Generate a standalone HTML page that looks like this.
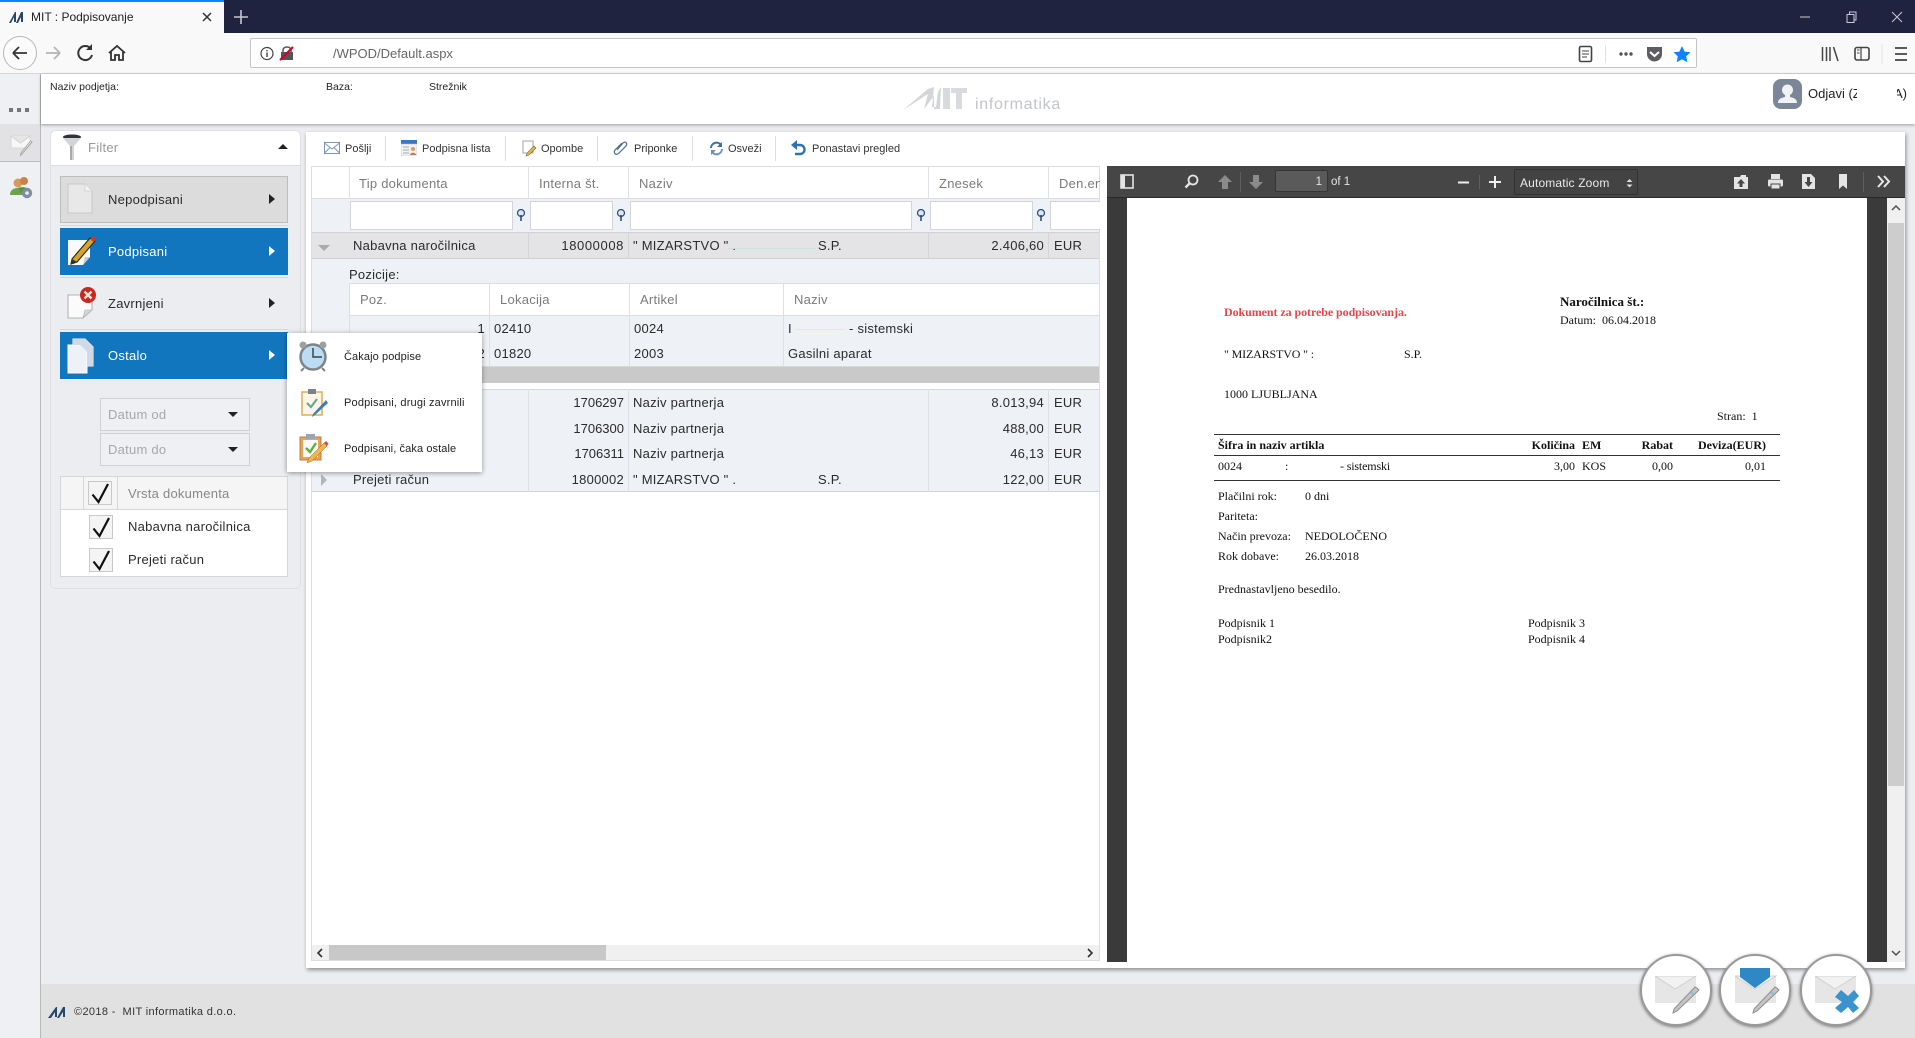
<!DOCTYPE html>
<html lang="sl"><head><meta charset="utf-8"><title>MIT : Podpisovanje</title>
<style>
html,body{margin:0;padding:0;width:1915px;height:1038px;overflow:hidden;background:#ecedf1}
#r{position:relative;width:1915px;height:1038px;overflow:hidden;font-family:"Liberation Sans",sans-serif;color:#222}
#r div,#r span.a,#r svg{position:absolute}
.t{position:absolute;white-space:nowrap;line-height:16px;height:16px}
.g{font-size:13px;letter-spacing:.25px;color:#2b2b2b}
.h{font-size:13px;letter-spacing:.25px;color:#7b7b7b}
.tb{font-size:11px;color:#333;top:141px}
.s{font-family:"Liberation Serif",serif;font-size:12px;color:#111}
.b{font-weight:bold}
.rgt{text-align:right}
.sep{width:1px;background:#ddd;top:136px;height:25px}
.fi{background:#fff;border:1px solid #d2d4d8;top:201px;height:27px;box-sizing:content-box}
.cb{background:#f4f4f4;border:1px solid #c9c9c9;width:22px;height:22px}
.vl{width:1px;background:#dcdfe4}
</style></head><body><div id="r">

<!-- browser chrome -->
<div style="left:0;top:0;width:1915px;height:33px;background:#1f2340"></div>
<div style="left:0;top:0;width:224px;height:33px;background:#f9f9fa"></div>
<div style="left:0;top:0;width:224px;height:2px;background:#0a84ff"></div>
<svg style="left:9px;top:11px" width="17" height="12" viewBox="0 0 17 12"><path d="M0 12 L6 1 L7 1 L7 11 L5 11 L5 6 L2 12Z M7 12 L12 1 L14 1 L14 11 L12 11 L12 6 L9 12Z" fill="#24476a"/></svg>
<div class="t" style="left:31px;top:9px;font-size:12px;color:#222">MIT : Podpisovanje</div>
<svg style="left:201px;top:11px" width="12" height="12"><path d="M2 2L10 10M10 2L2 10" stroke="#333" stroke-width="1.5"/></svg>
<svg style="left:234px;top:10px" width="14" height="14"><path d="M7 0V14M0 7H14" stroke="#c6c8d2" stroke-width="1.6"/></svg>
<svg style="left:1800px;top:11px" width="110" height="12"><path d="M0 6H10" stroke="#c8c9d2"/><path d="M47 3.5h7v8h-7zM49.500 3.500V1h6.500v8h-2" fill="none" stroke="#c8c9d2"/><path d="M92 1L102 11M102 1L92 11" stroke="#c8c9d2"/></svg>

<div style="left:0;top:33px;width:1915px;height:40px;background:#f9f9fa"></div>
<div style="left:0;top:73px;width:1915px;height:1px;background:#d6d6d8"></div>
<svg style="left:2px;top:35px" width="130" height="36" viewBox="0 0 130 36">
<circle cx="18" cy="18" r="16.500" fill="#fbfbfb" stroke="#b8b8b8"/>
<path d="M11 18H25M11 18L17 12M11 18L17 24" fill="none" stroke="#333" stroke-width="1.800"/>
<path d="M44 18H58M58 18L52 12M58 18L52 24" fill="none" stroke="#b4b4b4" stroke-width="1.800"/>
<path d="M89 14A7 7 0 1 0 90 20" fill="none" stroke="#333" stroke-width="2"/><path d="M90 9V15H84Z" fill="#333"/>
<path d="M107 18L115 11L123 18M109 17V25H113V20H117V25H121V17" fill="none" stroke="#333" stroke-width="1.800"/>
</svg>
<div style="left:250px;top:38px;width:1445px;height:28px;background:#fff;border:1px solid #c4c4c6;border-radius:2px"></div>
<svg style="left:260px;top:46px" width="38" height="15" viewBox="0 0 38 15"><circle cx="7" cy="7.500" r="6" fill="none" stroke="#444" stroke-width="1.200"/><path d="M7 6.500V11M7 4V5.400" stroke="#444" stroke-width="1.400"/><path d="M21 6h12v8H21z" fill="#555"/><path d="M23 6V4a4 3 0 0 1 8 0V6" fill="none" stroke="#555" stroke-width="1.500"/><path d="M20 14L33 1" stroke="#d70022" stroke-width="2"/></svg>
<div class="t" style="left:333px;top:46px;font-size:13px;color:#666">/WPOD/Default.aspx</div>
<svg style="left:1577px;top:44px" width="116" height="20" viewBox="0 0 116 20">
<rect x="2.500" y="2.500" width="12" height="15" rx="1.500" fill="none" stroke="#444" stroke-width="1.600"/><path d="M5 7H12M5 10H12M5 13H10" stroke="#444"/>
<path d="M28.500 1V19" stroke="#e2e2e2"/>
<circle cx="44" cy="10" r="1.700" fill="#555"/><circle cx="49" cy="10" r="1.700" fill="#555"/><circle cx="54" cy="10" r="1.700" fill="#555"/>
<path d="M70 3H85V10A7.500 7.500 0 0 1 70 10Z" fill="#5e5e62"/><path d="M73 8L77.500 12L82 8" fill="none" stroke="#fff" stroke-width="2"/>
<path d="M105 2L107.600 7.600L113.500 8.300L109.200 12.300L110.300 18.200L105 15.300L99.700 18.200L100.800 12.300L96.500 8.300L102.400 7.600Z" fill="#0a84ff"/>
</svg>
<svg style="left:1820px;top:44px" width="90" height="20" viewBox="0 0 90 20">
<path d="M2.500 3V17M6.500 3V17M10 3V17M13.500 3L18 17" stroke="#444" stroke-width="1.500" fill="none"/>
<rect x="35" y="3.500" width="14" height="12.500" rx="2" fill="none" stroke="#444" stroke-width="1.600"/><path d="M41 4V16" stroke="#444" stroke-width="1.200"/><path d="M37 6H39.500M37 9H39.500" stroke="#444"/>
<path d="M62 0V20" stroke="#e2e2e2"/>
<path d="M75 4H87M75 10H87M75 16H87" stroke="#444" stroke-width="1.800"/>
</svg>

<!-- left rail -->
<div style="left:0;top:74px;width:40px;height:964px;background:#eff0f3"></div>
<div style="left:40px;top:74px;width:1px;height:964px;background:#b9b9bb"></div>
<svg style="left:9px;top:108px" width="20" height="4"><rect x="0" y="0" width="4" height="4" fill="#777"/><rect x="8" y="0" width="4" height="4" fill="#777"/><rect x="16" y="0" width="4" height="4" fill="#777"/></svg>
<div style="left:0;top:124px;width:40px;height:38px;background:#e2e2e4;border-bottom:1px solid #bcbcbe;box-sizing:border-box"></div>
<svg style="left:10px;top:134px" width="24" height="22" viewBox="0 0 24 22"><path d="M1 2H20V14H1Z" fill="#f7f7f7" stroke="#d8d8d8"/><path d="M1 2L10.500 9L20 2" fill="#e6e6e6" stroke="#d0d0d0"/><path d="M22 8L12 20L10.500 21.500L11 19L20.500 7Z" fill="#ececec" stroke="#a8a8a8"/></svg>
<svg style="left:10px;top:175px" width="23" height="24" viewBox="0 0 23 24"><path d="M0 20C0 14 5 13 8 13C11 13 14 15 14 20Z" fill="#6da44a"/><circle cx="8" cy="8" r="4.500" fill="#d89a5a"/><path d="M8 13C10 12 17 11 18 15L12 19Z" fill="#5b9440"/><circle cx="14" cy="6" r="4" fill="#c9834a"/><circle cx="17" cy="18" r="5.200" fill="#7f8ea3"/><circle cx="17" cy="18" r="1.800" fill="#eef"/></svg>

<!-- header -->
<div style="left:41px;top:74px;width:1874px;height:50px;background:#fff;box-shadow:0 1px 3px rgba(0,0,0,.35)"></div>
<div class="t" style="left:50px;top:79px;font-size:10.500px;color:#222">Naziv podjetja:</div>
<div class="t" style="left:326px;top:79px;font-size:10.500px;color:#222">Baza:</div>
<div class="t" style="left:429px;top:79px;font-size:10.500px;color:#222">Strežnik</div>
<svg style="left:900px;top:86px" width="170" height="30" viewBox="0 0 170 30">
<path d="M3 24L28 3L34 1L32 21H36L38 6L41 1L40 23H34L34 10L24 23L28 8Z" fill="#d3d5d8"/>
<rect x="43" y="2" width="7" height="21" fill="#d8dadd"/><path d="M51 2H67V7H62V23H56V7H51Z" fill="#d8dadd"/>
<text x="75" y="23" font-family="Liberation Sans,sans-serif" font-size="16" letter-spacing=".7" fill="#c2c5c9">informatika</text></svg>
<svg style="left:1773px;top:79px" width="29" height="30" viewBox="0 0 29 30"><rect x="0" y="0" width="29" height="30" rx="8" fill="#7b8698"/><circle cx="14.500" cy="11" r="5.500" fill="#f1f2f4"/><path d="M12 15V18C8 19 5 20 5 24H24C24 20 21 19 17 18V15Z" fill="#f1f2f4"/></svg>
<div class="t" style="left:1808px;top:86px;font-size:13px;color:#222;width:49px;overflow:hidden">Odjavi (Z</div>
<div class="t" style="left:1897px;top:86px;font-size:13px;color:#222;width:12px;overflow:hidden;text-indent:-3px">A)</div>

<!-- filter panel -->
<div style="left:50px;top:130px;width:249px;height:457px;background:#ecedf1;border:1px solid #dfe0e3;border-radius:5px;box-sizing:content-box"></div>
<div style="left:51px;top:131px;width:249px;height:34px;background:#fff;border-bottom:1px solid #dcdde0;border-radius:5px 5px 0 0"></div>
<svg style="left:62px;top:134px" width="20" height="28" viewBox="0 0 20 28"><ellipse cx="10" cy="3" rx="9" ry="2.500" fill="#333"/><path d="M1 4L8 12V26H12V12L19 4Z" fill="#d2d4d6"/><path d="M8 12V26H10V12Z" fill="#a8aaac"/></svg>
<div class="t h" style="left:88px;top:140px;font-size:13px;color:#999">Filter</div>
<div style="left:278px;top:144px;width:0;height:0;border-left:5px solid transparent;border-right:5px solid transparent;border-bottom:5px solid #222"></div>

<div style="left:60px;top:176px;width:228px;height:47px;background:#dcdcdc;border:1px solid #bdbdbd;box-sizing:border-box"></div>
<svg style="left:67px;top:183px" width="26" height="32" viewBox="0 0 26 32"><path d="M1 1H18L25 8V30H1Z" fill="#e8e8e8" stroke="#c9c9c9"/><path d="M18 1V8H25" fill="#f4f4f4" stroke="#d2d2d2"/></svg>
<div class="t g" style="left:108px;top:192px">Nepodpisani</div>
<div style="left:269px;top:194px;border-left:6px solid #222;border-top:5px solid transparent;border-bottom:5px solid transparent"></div>
<div style="left:60px;top:225px;width:228px;height:1px;background:#d5d6d9"></div>

<div style="left:60px;top:228px;width:228px;height:47px;background:#1176bd"></div>
<svg style="left:66px;top:235px" width="32" height="32" viewBox="0 0 32 32"><path d="M2 5H24V22L17 30H2Z" fill="#fafafa"/><path d="M6 24L24 3L29 6L11 27L5 29Z" fill="#d9a520" stroke="#222" stroke-width="1.100"/><path d="M6 24L5 29L11 27Z" fill="#333"/><circle cx="27.500" cy="4" r="2.500" fill="#c5392f"/><path d="M17 30L24 22H19Z" fill="#c9c9c9"/></svg>
<div class="t g" style="left:108px;top:244px;color:#fff">Podpisani</div>
<div style="left:269px;top:246px;border-left:6px solid #fff;border-top:5px solid transparent;border-bottom:5px solid transparent"></div>
<div style="left:60px;top:277px;width:228px;height:1px;background:#d5d6d9"></div>

<svg style="left:66px;top:286px" width="32" height="34" viewBox="0 0 32 34"><path d="M2 9H26V24L17 32H2Z" fill="#fbfbfb" stroke="#9d9d9d" stroke-width=".8"/><path d="M17 32L19 24H26Z" fill="#d6d6d6" stroke="#aaa" stroke-width=".6"/><circle cx="22" cy="9" r="8" fill="#c9271f"/><path d="M18.500 5.500L25.500 12.500M25.500 5.500L18.500 12.500" stroke="#f3e3d0" stroke-width="2.500"/></svg>
<div class="t g" style="left:108px;top:296px">Zavrnjeni</div>
<div style="left:269px;top:298px;border-left:6px solid #222;border-top:5px solid transparent;border-bottom:5px solid transparent"></div>
<div style="left:60px;top:329px;width:228px;height:1px;background:#d5d6d9"></div>

<div style="left:60px;top:332px;width:228px;height:47px;background:#1176bd"></div>
<svg style="left:67px;top:338px" width="28" height="36" viewBox="0 0 28 36"><path d="M6 1H18L26 9V28H6Z" fill="#dfe7f2" stroke="#fff"/><path d="M1 7H13L20 14V35H1Z" fill="#edf2f9" stroke="#fff"/><path d="M6 1H18L26 9V28H20V14L13 7H6Z" fill="#cfd9e8"/></svg>
<div class="t g" style="left:108px;top:348px;color:#fff">Ostalo</div>
<div style="left:269px;top:350px;border-left:6px solid #fff;border-top:5px solid transparent;border-bottom:5px solid transparent"></div>

<div style="left:100px;top:398px;width:150px;height:33px;background:#eff0f3;border:1px solid #cfd0d3;box-sizing:border-box"></div>
<div class="t h" style="left:108px;top:407px;color:#a8a8a8">Datum od</div>
<div style="left:228px;top:412px;border-top:5px solid #222;border-left:5px solid transparent;border-right:5px solid transparent"></div>
<div style="left:100px;top:433px;width:150px;height:33px;background:#eff0f3;border:1px solid #cfd0d3;box-sizing:border-box"></div>
<div class="t h" style="left:108px;top:442px;color:#a8a8a8">Datum do</div>
<div style="left:228px;top:447px;border-top:5px solid #222;border-left:5px solid transparent;border-right:5px solid transparent"></div>

<div style="left:60px;top:476px;width:228px;height:101px;background:#fff;border:1px solid #d5d6d9;box-sizing:border-box"></div>
<div style="left:61px;top:477px;width:226px;height:32px;background:#f5f5f6;border-bottom:1px solid #d5d6d9"></div>
<div style="left:83px;top:477px;width:1px;height:32px;background:#d5d6d9"></div>
<div style="left:117px;top:477px;width:1px;height:32px;background:#d5d6d9"></div>
<div class="cb" style="left:88px;top:481px"></div>
<svg style="left:90px;top:483px" width="22" height="22"><path d="M2.500 11.500L8.500 19L18 1" fill="none" stroke="#111" stroke-width="2.200"/></svg>
<div class="t h" style="left:128px;top:486px;color:#888">Vrsta dokumenta</div>
<div class="cb" style="left:89px;top:515px"></div>
<svg style="left:91px;top:517px" width="22" height="22"><path d="M2.500 11.500L8.500 19L18 1" fill="none" stroke="#111" stroke-width="2.200"/></svg>
<div class="t g" style="left:128px;top:519px">Nabavna naročilnica</div>
<div class="cb" style="left:89px;top:548px"></div>
<svg style="left:91px;top:550px" width="22" height="22"><path d="M2.500 11.500L8.500 19L18 1" fill="none" stroke="#111" stroke-width="2.200"/></svg>
<div class="t g" style="left:128px;top:552px">Prejeti račun</div>

<!-- main panel -->
<div style="left:306px;top:132px;width:1599px;height:836px;background:#fff;box-shadow:1px 2px 4px rgba(0,0,0,.4)"></div>
<div class="sep" style="left:385px"></div><div class="sep" style="left:505px"></div><div class="sep" style="left:597px"></div><div class="sep" style="left:692px"></div><div class="sep" style="left:775px"></div>
<svg style="left:324px;top:142px" width="16" height="12" viewBox="0 0 16 12"><rect x=".5" y=".5" width="15" height="11" fill="#fff" stroke="#7d97b8"/><path d="M.5 1L8 7L15.500 1M.5 11L6 5.500M15.500 11L10 5.500" fill="none" stroke="#7d97b8"/></svg>
<div class="t tb" style="left:345px">Pošlji</div>
<svg style="left:401px;top:140px" width="16" height="16" viewBox="0 0 16 16"><rect x="0" y="0" width="16" height="5" fill="#3b78c4"/><rect x="0" y="4" width="16" height="12" fill="#f2f2f2" stroke="#bbb" stroke-width=".5"/><path d="M2 7H8M2 10H8M2 13H8" stroke="#aaa"/><circle cx="12" cy="9" r="2" fill="#d89a6a"/><path d="M9 15C9 12 15 12 15 15Z" fill="#c37a5a"/></svg>
<div class="t tb" style="left:422px">Podpisna lista</div>
<svg style="left:522px;top:140px" width="16" height="17" viewBox="0 0 16 17"><path d="M1 1H11V13H1Z" fill="#fff" stroke="#9fa7b3"/><path d="M14 8L7 15L4 16L5 13L12 6Z" fill="#e0b64f" stroke="#7a6a3a" stroke-width=".6"/></svg>
<div class="t tb" style="left:541px">Opombe</div>
<svg style="left:613px;top:140px" width="15" height="16" viewBox="0 0 15 16"><path d="M4 10L10 3C12 1 15 3 13 6L6 13C3 16 0 13 2 10L9 3" fill="none" stroke="#4e6d93" stroke-width="1.200"/></svg>
<div class="t tb" style="left:634px">Priponke</div>
<svg style="left:709px;top:141px" width="15" height="15" viewBox="0 0 15 15"><path d="M2 7A5.500 5.500 0 0 1 12 4" fill="none" stroke="#3e6fa6" stroke-width="2"/><path d="M13 8A5.500 5.500 0 0 1 3 11" fill="none" stroke="#6d93bd" stroke-width="2"/><path d="M13 1V6H8Z" fill="#3e6fa6"/><path d="M2 14V9H7Z" fill="#6d93bd"/></svg>
<div class="t tb" style="left:728px">Osveži</div>
<svg style="left:791px;top:140px" width="15" height="16" viewBox="0 0 15 16"><path d="M5 5H9A4.500 4.500 0 0 1 9 14H4" fill="none" stroke="#2f72ae" stroke-width="2.400"/><path d="M6 0V10L0 5Z" fill="#2f72ae"/></svg>
<div class="t tb" style="left:812px">Ponastavi pregled</div>

<!-- table -->
<div style="left:311px;top:166px;width:789px;height:795px;background:#fff;border:1px solid #dcdde0;box-sizing:border-box"></div>
<div style="left:311px;top:166px;width:789px;height:33px;background:#fff;border:1px solid #dcdde0;box-sizing:border-box"></div>
<div class="vl" style="left:349px;top:166px;height:32px"></div>
<div class="vl" style="left:528px;top:166px;height:32px"></div>
<div class="vl" style="left:628px;top:166px;height:32px"></div>
<div class="vl" style="left:928px;top:166px;height:32px"></div>
<div class="vl" style="left:1048px;top:166px;height:32px"></div>
<div class="t h" style="left:359px;top:176px">Tip dokumenta</div>
<div class="t h" style="left:539px;top:176px">Interna št.</div>
<div class="t h" style="left:639px;top:176px">Naziv</div>
<div class="t h" style="left:939px;top:176px">Znesek</div>
<div style="left:1050px;top:167px;width:50px;height:31px;overflow:hidden"><span class="t h" style="left:9px;top:9px">Den.enota</span></div>

<div style="left:312px;top:199px;width:787px;height:33px;background:#eef1f6"></div>
<div class="fi" style="left:350px;width:161px"></div>
<div class="fi" style="left:530px;width:81px"></div>
<div class="fi" style="left:630px;width:280px"></div>
<div class="fi" style="left:930px;width:101px"></div>
<div class="fi" style="left:1050px;width:49px;border-right:0"></div>
<svg style="left:516px;top:209px" width="10" height="13" viewBox="0 0 10 13"><circle cx="5" cy="4" r="3.500" fill="#dbe6f2" stroke="#2a4e7a" stroke-width="1.200"/><path d="M5 6V12" stroke="#2a4e7a" stroke-width="1.600"/></svg>
<svg style="left:616px;top:209px" width="10" height="13" viewBox="0 0 10 13"><circle cx="5" cy="4" r="3.500" fill="#dbe6f2" stroke="#2a4e7a" stroke-width="1.200"/><path d="M5 6V12" stroke="#2a4e7a" stroke-width="1.600"/></svg>
<svg style="left:916px;top:209px" width="10" height="13" viewBox="0 0 10 13"><circle cx="5" cy="4" r="3.500" fill="#dbe6f2" stroke="#2a4e7a" stroke-width="1.200"/><path d="M5 6V12" stroke="#2a4e7a" stroke-width="1.600"/></svg>
<svg style="left:1036px;top:209px" width="10" height="13" viewBox="0 0 10 13"><circle cx="5" cy="4" r="3.500" fill="#dbe6f2" stroke="#2a4e7a" stroke-width="1.200"/><path d="M5 6V12" stroke="#2a4e7a" stroke-width="1.600"/></svg>

<div style="left:312px;top:232px;width:787px;height:27px;background:#e4e4e6;border-top:1px solid #d0d1d4;border-bottom:1px solid #d0d1d4;box-sizing:border-box"></div>
<div class="vl" style="left:528px;top:232px;height:27px;background:#d4d5d8"></div>
<div class="vl" style="left:628px;top:232px;height:27px;background:#d4d5d8"></div>
<div class="vl" style="left:928px;top:232px;height:27px;background:#d4d5d8"></div>
<div class="vl" style="left:1048px;top:232px;height:27px;background:#d4d5d8"></div>
<div style="left:318px;top:245px;border-top:6px solid #aaa;border-left:6px solid transparent;border-right:6px solid transparent"></div>
<div class="t g" style="left:353px;top:238px">Nabavna naročilnica</div>
<div class="t g rgt" style="left:524px;top:238px;width:100px;letter-spacing:.6px">18000008</div>
<div class="t g" style="left:633px;top:238px">" MIZARSTVO " .</div>
<div style="left:727px;top:248px;width:88px;height:1px;background:#c5e4dc"></div>
<div class="t g" style="left:818px;top:238px">S.P.</div>
<div class="t g rgt" style="left:944px;top:238px;width:100px">2.406,60</div>
<div class="t g" style="left:1054px;top:238px">EUR</div>

<div style="left:312px;top:259px;width:787px;height:108px;background:#eef1f6"></div>
<div class="t g" style="left:349px;top:267px">Pozicije:</div>
<div style="left:349px;top:283px;width:750px;height:33px;background:#fff;border:1px solid #dcdde0;border-right:0;box-sizing:border-box"></div>
<div class="vl" style="left:489px;top:283px;height:83px"></div>
<div class="vl" style="left:629px;top:283px;height:83px"></div>
<div class="vl" style="left:783px;top:283px;height:83px"></div>
<div class="vl" style="left:349px;top:283px;height:83px"></div>
<div class="t h" style="left:360px;top:292px">Poz.</div>
<div class="t h" style="left:500px;top:292px">Lokacija</div>
<div class="t h" style="left:640px;top:292px">Artikel</div>
<div class="t h" style="left:794px;top:292px">Naziv</div>
<div class="t g rgt" style="left:430px;top:321px;width:55px">1</div>
<div class="t g" style="left:494px;top:321px">02410</div>
<div class="t g" style="left:634px;top:321px">0024</div>
<div class="t g" style="left:788px;top:321px">I</div>
<div style="left:795px;top:329px;width:50px;height:1px;background:#ece9c5"></div>
<div class="t g" style="left:849px;top:321px">- sistemski</div>
<div class="t g rgt" style="left:430px;top:346px;width:55px">2</div>
<div class="t g" style="left:494px;top:346px">01820</div>
<div class="t g" style="left:634px;top:346px">2003</div>
<div class="t g" style="left:788px;top:346px">Gasilni aparat</div>
<div style="left:349px;top:366px;width:750px;height:1px;background:#d5d7db"></div>
<div style="left:312px;top:367px;width:787px;height:16px;background:#c9c9c9"></div>
<div style="left:312px;top:383px;width:787px;height:6px;background:#fff"></div>
<div style="left:312px;top:389px;width:787px;height:103px;background:#eef1f6;border-top:1px solid #d5d7db;border-bottom:1px solid #d0d2d6;box-sizing:border-box"></div>
<div class="vl" style="left:528px;top:389px;height:103px"></div>
<div class="vl" style="left:628px;top:389px;height:103px"></div>
<div class="vl" style="left:928px;top:389px;height:103px"></div>
<div class="vl" style="left:1048px;top:389px;height:103px"></div>
<div class="t g rgt" style="left:524px;top:395px;width:100px;letter-spacing:0">1706297</div>
<div class="t g" style="left:633px;top:395px">Naziv partnerja</div>
<div class="t g rgt" style="left:944px;top:395px;width:100px">8.013,94</div>
<div class="t g" style="left:1054px;top:395px">EUR</div>
<div class="t g rgt" style="left:524px;top:421px;width:100px;letter-spacing:0">1706300</div>
<div class="t g" style="left:633px;top:421px">Naziv partnerja</div>
<div class="t g rgt" style="left:944px;top:421px;width:100px">488,00</div>
<div class="t g" style="left:1054px;top:421px">EUR</div>
<div class="t g rgt" style="left:524px;top:446px;width:100px;letter-spacing:0">1706311</div>
<div class="t g" style="left:633px;top:446px">Naziv partnerja</div>
<div class="t g rgt" style="left:944px;top:446px;width:100px">46,13</div>
<div class="t g" style="left:1054px;top:446px">EUR</div>
<div style="left:321px;top:474px;border-left:6px solid #b5b5b5;border-top:6px solid transparent;border-bottom:6px solid transparent"></div>
<div class="t g" style="left:353px;top:472px">Prejeti račun</div>
<div class="t g rgt" style="left:524px;top:472px;width:100px">1800002</div>
<div class="t g" style="left:633px;top:472px">" MIZARSTVO " .</div>
<div class="t g" style="left:818px;top:472px">S.P.</div>
<div class="t g rgt" style="left:944px;top:472px;width:100px">122,00</div>
<div class="t g" style="left:1054px;top:472px">EUR</div>

<div style="left:312px;top:945px;width:787px;height:15px;background:#f0f0f0"></div>
<div style="left:329px;top:945px;width:277px;height:15px;background:#c8c8c8"></div>
<svg style="left:316px;top:948px" width="8" height="10"><path d="M6 1L2 5L6 9" fill="none" stroke="#333" stroke-width="1.600"/></svg>
<svg style="left:1086px;top:948px" width="8" height="10"><path d="M2 1L6 5L2 9" fill="none" stroke="#333" stroke-width="1.600"/></svg>

<!-- popup -->
<div style="left:287px;top:333px;width:195px;height:139px;background:#fff;box-shadow:0 1px 5px rgba(0,0,0,.4)"></div>
<svg style="left:298px;top:340px" width="30" height="32" viewBox="0 0 30 32"><circle cx="15" cy="17" r="12.500" fill="#bcdcf3" stroke="#7d8488" stroke-width="2.500"/><circle cx="5" cy="5" r="3.500" fill="#9aa0a4"/><circle cx="25" cy="5" r="3.500" fill="#9aa0a4"/><path d="M15 8V17H24" fill="none" stroke="#3d4347" stroke-width="1.500"/><path d="M6 28L3 31M24 28L27 31" stroke="#7d8488" stroke-width="2"/></svg>
<div class="t" style="left:344px;top:349px;font-size:11px;color:#222;letter-spacing:.1px">Čakajo podpise</div>
<svg style="left:301px;top:388px" width="29" height="30" viewBox="0 0 29 30"><rect x="1" y="4" width="20" height="23" fill="#fdf6e6" stroke="#dfb361" stroke-width="1.600"/><rect x="7" y="1" width="8" height="5" fill="#7d8288"/><path d="M6 15L10 19L16 11" fill="none" stroke="#6aa795" stroke-width="2.200"/><path d="M27 15L14 27L11 29L12 26L25 12Z" fill="#3f7cc4"/></svg>
<div class="t" style="left:344px;top:395px;font-size:11px;color:#222;letter-spacing:.18px">Podpisani, drugi zavrnili</div>
<svg style="left:299px;top:433px" width="30" height="31" viewBox="0 0 30 31"><rect x="1" y="4" width="21" height="23" fill="#e8a35a" stroke="#c07e3b"/><rect x="4" y="7" width="15" height="17" fill="#f7f9fb"/><rect x="7" y="1" width="9" height="5" fill="#9aa6b6"/><path d="M7 15L11 19L17 10" fill="none" stroke="#5ab33a" stroke-width="2.400"/><path d="M28 13L13 28L8 30L10 25L25 10Z" fill="#efb64e" stroke="#9a6a2a" stroke-width=".5"/><path d="M28 13L25 10L27 8L29.500 10.500Z" fill="#d2504a"/></svg>
<div class="t" style="left:344px;top:441px;font-size:11px;color:#222;letter-spacing:.1px">Podpisani, čaka ostale</div>

<!-- pdf viewer -->
<div style="left:1107px;top:166px;width:780px;height:796px;background:#3a3a3a"></div>
<div style="left:1107px;top:166px;width:798px;height:32px;background:#464646;border-bottom:1px solid #2a2a2a;box-sizing:border-box"></div>
<svg style="left:1120px;top:174px" width="14" height="15"><rect x="1" y="1" width="12" height="13" fill="none" stroke="#e4e4e4" stroke-width="1.600"/><rect x="1" y="1" width="4" height="13" fill="#e4e4e4"/></svg>
<svg style="left:1184px;top:174px" width="15" height="15"><circle cx="9" cy="6" r="4.500" fill="none" stroke="#e4e4e4" stroke-width="1.800"/><path d="M6 9L1.500 13.500" stroke="#e4e4e4" stroke-width="2.400"/></svg>
<svg style="left:1217px;top:174px" width="16" height="16"><path d="M8 1L15 8H11V15H5V8H1Z" fill="#8b8b8b"/></svg>
<div style="left:1240px;top:172px;width:1px;height:20px;background:#5f5f5f"></div>
<svg style="left:1248px;top:174px" width="16" height="16"><path d="M8 15L15 8H11V1H5V8H1Z" fill="#8b8b8b"/></svg>
<div style="left:1275px;top:170px;width:53px;height:22px;background:#5a5a5a;border:1px solid #353535;border-radius:2px;box-sizing:border-box"></div>
<div class="t rgt" style="left:1290px;top:174px;width:32px;font-size:11.500px;color:#e4e4e4">1</div>
<div class="t" style="left:1331px;top:174px;font-size:11.500px;color:#e4e4e4">of 1</div>
<svg style="left:1458px;top:174px" width="44" height="16"><path d="M0 8.500H11" stroke="#eee" stroke-width="2"/><path d="M21.500 1V15" stroke="#606060"/><path d="M31 8H43M37 2V14" stroke="#eee" stroke-width="2"/></svg>
<div style="left:1514px;top:169px;width:124px;height:26px;background:#434343;border:1px solid #333;border-radius:2px;box-sizing:border-box"></div>
<div class="t" style="left:1520px;top:175px;font-size:12px;letter-spacing:.15px;color:#eaeaea">Automatic Zoom</div>
<svg style="left:1626px;top:178px" width="7" height="10"><path d="M.5 4L3.500 1L6.500 4ZM.5 6.500L3.500 9.500L6.500 6.500Z" fill="#ddd"/></svg>
<svg style="left:1733px;top:173px" width="16" height="17"><path d="M1 4H7L8 2H13V4H15V16H1Z" fill="#e4e4e4"/><path d="M8 6L12 10.500H9.500V14H6.500V10.500H4Z" fill="#464646"/></svg>
<svg style="left:1767px;top:173px" width="17" height="17"><path d="M4 1H13V6H4Z" fill="#e4e4e4"/><rect x="1" y="6.500" width="15" height="7" rx="1.500" fill="#e4e4e4"/><rect x="4" y="11" width="9" height="5" fill="#e4e4e4" stroke="#464646"/></svg>
<svg style="left:1801px;top:173px" width="15" height="17"><path d="M1 1H10L14 5V16H1Z" fill="#e4e4e4"/><path d="M6 4H9V9H11.500L7.500 14L3.500 9H6Z" fill="#464646"/></svg>
<svg style="left:1838px;top:173px" width="10" height="17"><path d="M1 1H9V16L5 12.500L1 16Z" fill="#e4e4e4"/></svg>
<div style="left:1863px;top:172px;width:1px;height:20px;background:#5f5f5f"></div>
<svg style="left:1877px;top:175px" width="14" height="13"><path d="M1 1L6 6.500L1 12M7 1L12 6.500L7 12" fill="none" stroke="#e8e8e8" stroke-width="2"/></svg>

<div style="left:1127px;top:198px;width:740px;height:764px;background:#fff"></div>
<div style="left:1887px;top:198px;width:18px;height:764px;background:#f0f0f0"></div>
<div style="left:1888px;top:223px;width:16px;height:563px;background:#cdcdcd"></div>
<svg style="left:1891px;top:204px" width="10" height="8"><path d="M1 6L5 2L9 6" fill="none" stroke="#505050" stroke-width="1.500"/></svg>
<svg style="left:1891px;top:949px" width="10" height="8"><path d="M1 2L5 6L9 2" fill="none" stroke="#505050" stroke-width="1.500"/></svg>

<div class="t s b" style="left:1224px;top:304px;color:#e8464f;letter-spacing:-.07px">Dokument za potrebe podpisovanja.</div>
<div class="t s b" style="left:1560px;top:294px;font-size:13px">Naročilnica št.:</div>
<div class="t s" style="left:1560px;top:312px">Datum:&nbsp; 06.04.2018</div>
<div class="t s" style="left:1224px;top:346px;letter-spacing:-.15px">" MIZARSTVO " :</div>
<div class="t s" style="left:1404px;top:346px">S.P.</div>
<div class="t s" style="left:1224px;top:386px">1000 LJUBLJANA</div>
<div class="t s" style="left:1717px;top:408px">Stran:&nbsp; 1</div>
<div style="left:1214px;top:434px;width:566px;height:1px;background:#333"></div>
<div style="left:1214px;top:455px;width:566px;height:1px;background:#333"></div>
<div style="left:1214px;top:480px;width:566px;height:1px;background:#333"></div>
<div class="t s b" style="left:1218px;top:437px">Šifra in naziv artikla</div>
<div class="t s b rgt" style="left:1495px;top:437px;width:80px">Količina</div>
<div class="t s b" style="left:1582px;top:437px">EM</div>
<div class="t s b rgt" style="left:1593px;top:437px;width:80px">Rabat</div>
<div class="t s b rgt" style="left:1666px;top:437px;width:100px">Deviza(EUR)</div>
<div class="t s" style="left:1218px;top:458px">0024</div>
<div class="t s" style="left:1285px;top:458px">:</div>
<div class="t s" style="left:1340px;top:458px;letter-spacing:-.15px">- sistemski</div>
<div class="t s rgt" style="left:1495px;top:458px;width:80px">3,00</div>
<div class="t s" style="left:1582px;top:458px">KOS</div>
<div class="t s rgt" style="left:1593px;top:458px;width:80px">0,00</div>
<div class="t s rgt" style="left:1666px;top:458px;width:100px">0,01</div>
<div class="t s" style="left:1218px;top:488px">Plačilni rok:</div>
<div class="t s" style="left:1305px;top:488px">0 dni</div>
<div class="t s" style="left:1218px;top:508px">Pariteta:</div>
<div class="t s" style="left:1218px;top:528px">Način prevoza:</div>
<div class="t s" style="left:1305px;top:528px">NEDOLOČENO</div>
<div class="t s" style="left:1218px;top:548px">Rok dobave:</div>
<div class="t s" style="left:1305px;top:548px">26.03.2018</div>
<div class="t s" style="left:1218px;top:581px">Prednastavljeno besedilo.</div>
<div class="t s" style="left:1218px;top:615px">Podpisnik 1</div>
<div class="t s" style="left:1218px;top:631px">Podpisnik2</div>
<div class="t s" style="left:1528px;top:615px">Podpisnik 3</div>
<div class="t s" style="left:1528px;top:631px">Podpisnik 4</div>

<!-- footer -->
<div style="left:41px;top:984px;width:1874px;height:54px;background:#e1e1e1"></div>
<svg style="left:48px;top:1006px" width="19" height="12" viewBox="0 0 19 12"><path d="M0 12L8 1H9V11H7V6L3 12Z M9 12L15 1H17V11H15V6L11 12Z" fill="#25496e"/></svg>
<div class="t" style="left:74px;top:1004px;font-size:11px;color:#333;letter-spacing:.35px">©2018 -&nbsp; MIT informatika d.o.o.</div>

<!-- round buttons -->
<div style="left:1640px;top:954px;width:68px;height:68px;border-radius:50%;background:#fff;border:2px solid #9a9a9a;box-shadow:0 1px 3px rgba(0,0,0,.5)"></div>
<div style="left:1719px;top:954px;width:68px;height:68px;border-radius:50%;background:#fff;border:2px solid #9a9a9a;box-shadow:0 1px 3px rgba(0,0,0,.5)"></div>
<div style="left:1800px;top:954px;width:68px;height:68px;border-radius:50%;background:#fff;border:2px solid #9a9a9a;box-shadow:0 1px 3px rgba(0,0,0,.5)"></div>
<svg style="left:1655px;top:976px" width="46" height="38" viewBox="0 0 46 38"><path d="M0 0H41V27H0Z" fill="#e6e6e6"/><path d="M0 0L20 13L41 0Z" fill="#f2f2f2" stroke="#d0d0d0"/><path d="M42 12L44 14L22 35L18 37L19 33L40 11Z" fill="#c4c4c4" stroke="#8f8f8f"/><path d="M36 16L38.500 18.500" stroke="#7cc0e6" stroke-width="2"/></svg>
<svg style="left:1735px;top:968px" width="46" height="46" viewBox="0 0 46 46"><path d="M0 8H41V35H0Z" fill="#e6e6e6"/><path d="M0 8L20 21L41 8Z" fill="#f2f2f2" stroke="#d0d0d0"/><path d="M5 0H35V9L20 20L5 9Z" fill="#2f88c6"/><path d="M42 20L44 22L22 43L18 45L19 41L40 19Z" fill="#c4c4c4" stroke="#8f8f8f"/><path d="M36 24L38.500 26.500" stroke="#7cc0e6" stroke-width="2"/></svg>
<svg style="left:1815px;top:976px" width="46" height="40" viewBox="0 0 46 40"><path d="M0 0H41V27H0Z" fill="#e6e6e6"/><path d="M0 0L20 13L41 0Z" fill="#f2f2f2" stroke="#d0d0d0"/><path d="M20 21L26 14L33 20L39 14L44 20L38 26L44 32L38 37L33 31L26 37L20 32L27 26Z" fill="#3b93cd"/></svg>

</div></body></html>
